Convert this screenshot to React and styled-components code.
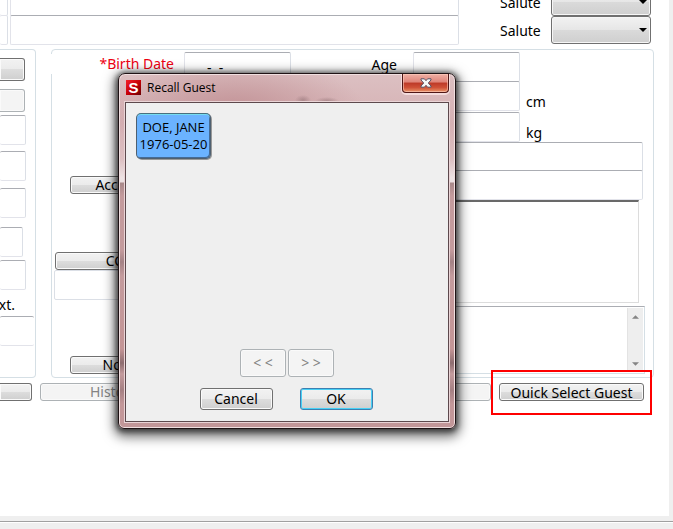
import React from 'react';
import styled, { createGlobalStyle } from 'styled-components';

const GlobalStyle = createGlobalStyle`
  *, *::before, *::after { box-sizing: border-box; }
  html, body { margin: 0; padding: 0; }
  body { overflow: hidden; }
  body, button, input, select, textarea {
    font-family: "Noto Sans", "Open Sans", sans-serif;
    font-size: 14px;
    color: #000;
  }
`;

const Screen = styled.div`
  position: relative;
  display: flex;
  flex-direction: column;
  height: 100vh;
  min-height: 480px;
  background: #efefef;
  overflow: hidden;
`;

const Sheet = styled.main`
  flex: 1;
  min-height: 0;
  margin-right: 4px;
  background: #fff;
  overflow: hidden;
`;

const StatusBar = styled.footer`
  height: 8px;
  margin-top: 5px;
  border-top: 1px solid #a0a0a0;
  box-shadow: inset 0 1px 0 #fff;
`;

const Field = styled.input`
  display: block;
  flex: ${(p) => (p.$width ? 'none' : '1')};
  width: ${(p) => (p.$width ? `${p.$width}px` : '100%')};
  min-width: 0;
  height: 30px;
  padding: 0 0 0 22px;
  border: 1px solid #e2e3ea;
  border-top-color: #abadb3;
  border-right-color: #dbdfe6;
  border-radius: 2px;
  background: #fff;
  outline: none;
`;

const Label = styled.label`
  line-height: 20px;
  white-space: nowrap;
  color: ${(p) => (p.$required ? '#ed0012' : '#000')};
`;

const Button = styled.button`
  display: flex;
  align-items: center;
  justify-content: center;
  flex: ${(p) => (p.$width ? 'none' : '1')};
  width: ${(p) => (p.$width ? `${p.$width}px` : 'auto')};
  height: ${(p) => p.$height || 18}px;
  padding: 0;
  border: 1px solid #707070;
  border-radius: 3px;
  background: linear-gradient(#f2f2f2, #ebebeb 50%, #dddddd 50%, #cfcfcf);
  box-shadow: inset 0 0 0 1px #fafafa;
  line-height: 18px;
  white-space: nowrap;
  overflow: hidden;

  &:disabled {
    border-color: #adb2b5;
    background: #f4f4f4;
    color: #838383;
  }
`;

const BaselineClip = styled.span`
  align-self: flex-start;
  height: 14px;
  line-height: 18px;
  overflow: hidden;
`;

/* Name strip */

const NameStrip = styled.section`
  display: flex;
  height: 58px;
  margin-top: -13px;
`;

const NameColumn = styled.div`
  flex: ${(p) => (p.$narrow ? 'none' : '1')};
  width: ${(p) => (p.$narrow ? '8px' : 'auto')};
  margin-right: ${(p) => (p.$narrow ? '2px' : '0')};
  margin-top: -1px;
  overflow: hidden;
`;

const NameField = styled(Field)`
  padding: 0;
  border-left-width: ${(p) => (p.$narrow ? '0' : '1px')};
  border-top-color: ${(p) => (p.$narrow ? '#e2e3ea' : '#abadb3')};
  & + & { margin-top: -1px; }
`;

const SaluteColumn = styled.div`
  width: 151px;
  margin: 0 18px 0 41px;
`;

const SaluteRow = styled.div`
  display: flex;
  align-items: center;
  justify-content: space-between;
  height: 28px;
  padding-top: 1px;
`;

const SaluteLabel = styled(Label)`
  padding-top: 2px;
`;

const SelectBox = styled.div`
  position: relative;
  width: 100px;
  height: 28px;

  svg {
    position: absolute;
    right: 4px;
    top: 12px;
    pointer-events: none;
  }
`;

const Select = styled.select`
  width: 100%;
  height: 100%;
  appearance: none;
  border: 1px solid #707070;
  border-radius: 3px;
  background: linear-gradient(#f2f2f2, #e6e6e6 50%, #dadada 50%, #cfcfcf);
  box-shadow: inset 0 0 0 1px #f6f6f6;
  outline: none;
`;

/* Panels */

const Panels = styled.section`
  display: flex;
  gap: 15px;
  height: 329px;
  margin: 4px 15px 0 0;
`;

const ContactPanel = styled.div`
  display: flex;
  flex-direction: column;
  width: 36px;
  padding-top: 8px;
  border: 1px solid #d5dfe5;
  border-left: 0;
  border-radius: 0 4px 4px 0;
`;

const ContactField = styled(Field)`
  flex: none;
  width: ${(p) => p.$w || 26}px;
  margin-top: ${(p) => p.$gap}px;
  padding: 0;
  border-left: 0;
`;

const ExtensionField = styled(ContactField)`
  border-right: 0;
`;

const ContactButton = styled(Button)`
  flex: none;
  width: 25px;
  margin-bottom: 8px;
  border-left: 0;
  border-radius: 0 3px 3px 0;
`;

const CroppedLabel = styled.label`
  display: flex;
  justify-content: flex-end;
  width: 15px;
  margin: 5px 0 1px;
  line-height: 20px;
  overflow: hidden;
`;

const GuestPanel = styled.div`
  flex: 1;
  display: flex;
  gap: 10px;
  padding-top: 2px;
  border: 1px solid #d5dfe5;
  border-radius: 4px;
`;

const CaptionColumn = styled.div`
  display: flex;
  flex-direction: column;
  align-items: flex-end;
  width: 122px;
`;

const BirthCaption = styled.div`
  align-self: stretch;
  height: 20px;
  margin: 2px 0 102px -1px;
  background: #fff;
  text-align: right;
`;

const CaptionButton = styled(Button)`
  flex: none;
  margin-bottom: ${(p) => p.$after || 0}px;
`;

const CaptionField = styled(Field)`
  flex: none;
  margin-bottom: 56px;
  border-color: #dbdfe6;
`;

const FieldColumn = styled.div`
  flex: 1;
  min-width: 0;
`;

const FieldRow = styled.div`
  display: flex;
  align-items: flex-start;
  height: ${(p) => p.$height || 30}px;
  margin-right: 10px;
`;

const AgeLabel = styled(Label)`
  width: 122px;
  padding: 3px 16px 0 0;
  text-align: right;
`;

const UnitSpacer = styled.div`
  width: 122px;
`;

const UnitLabel = styled(Label)`
  padding: 11px 0 0 6px;
`;

const SummaryBox = styled.textarea`
  display: block;
  width: calc(100% - 14px);
  height: 103px;
  border: 1px solid #dcdcdc;
  border-top: 2px solid #696969;
  resize: none;
  outline: none;
`;

const NotesBox = styled.div`
  display: flex;
  height: 68px;
  margin: 3px 8px 0 0;
  border: 1px solid #d5dfe5;
  border-top-color: #abadb3;
`;

const NotesArea = styled.textarea`
  flex: 1;
  min-width: 0;
  border: 0;
  resize: none;
  outline: none;
`;

const ScrollTrack = styled.div`
  display: flex;
  flex-direction: column;
  align-items: center;
  justify-content: space-between;
  width: 16px;
  margin: 1px;
  padding: 7px 0 6px;
  border-left: 1px solid #e3e3e3;
  background: #eeeeee;
`;

const ActionRow = styled.div`
  display: flex;
  gap: 8px;
  margin: 5px 25px 0 0;
`;

const LeadButton = styled(Button)`
  border-left: 0;
  border-radius: 0 3px 3px 0;
`;

const Highlight = styled.div`
  position: absolute;
  right: 21px;
  top: 370px;
  width: 161px;
  height: 45px;
  border: 2px solid #fe0000;
  pointer-events: none;
`;

/* Dialog */

const Dialog = styled.div`
  position: absolute;
  left: 118px;
  top: 73px;
  width: 338px;
  padding: 0 6px 6px;
  border: 1px solid #1f1315;
  border-radius: 7px 7px 6px 6px;
  background:
    radial-gradient(ellipse 8px 5px at 184px 26px, #95747899, transparent),
    radial-gradient(ellipse 12px 4px at 208px 27px, #95747899, transparent),
    radial-gradient(ellipse 130px 50px at 115px 34px, #c39498, transparent),
    linear-gradient(#dcc0c2 0, #d5b0b3 50px, #dcbfc1 85px, #eee3e4 104px, #ece0e1 108px, #a88889 109px, #c49b9d 122px, #c49b9d 176px, #a48285 188px, #c49b9d 202px, #c49596 275px, #8e6d70 289px, #c49b9d 300px, #a58083 316px, #c39799 330px);
  box-shadow:
    inset 0 0 0 1px #f0dfe0,
    0 1px 5px 2px rgba(0, 0, 0, 0.5),
    0 4px 12px 4px rgba(0, 0, 0, 0.55);
`;

const TitleBar = styled.header`
  display: flex;
  align-items: flex-start;
  height: 28px;
`;

const Logo = styled.div`
  display: flex;
  align-items: center;
  justify-content: center;
  width: 15px;
  height: 15px;
  margin: 6px 6px 0 1px;
  background: linear-gradient(135deg, #f5202a, #c80008 50%, #680003);
  color: #fff;
  font: bold 15px/15px "Liberation Sans", sans-serif;
`;

const Title = styled.h1`
  flex: 1;
  margin: 5px 0 0;
  font-family: "Open Sans", "Noto Sans", sans-serif;
  font-size: 12px;
  font-weight: 400;
  line-height: 18px;
`;

const CloseButton = styled.button`
  display: flex;
  align-items: center;
  justify-content: center;
  width: 47px;
  height: 19px;
  padding: 0;
  border: 1px solid #4f1716;
  border-top: 0;
  border-radius: 0 0 4px 4px;
  background: linear-gradient(#efb0a6, #df8478 45%, #bd3927 50%, #cf5137 75%, #e99569);
  box-shadow: inset 0 0 0 1px rgba(255, 205, 190, 0.6), 0 1px 0 1px rgba(255, 235, 235, 0.7);
`;

const Client = styled.div`
  display: flex;
  flex-direction: column;
  height: 320px;
  padding: 10px 10px 11px;
  border: 1px solid #5d494d;
  background: #efefef;
  box-shadow: 0 0 0 1px #ead4d6;
`;

const GuestTile = styled.button`
  width: 75px;
  height: 46px;
  padding: 0;
  border: 1px solid #4f6070;
  border-top-color: #48707f;
  border-radius: 5px;
  background: #6bb3ff;
  box-shadow: inset 0 1px 0 #75dcf0, inset -1px -1px 0 #456b96, 1px 1px 0 #999;
  font-family: "Open Sans", "Noto Sans", sans-serif;
  font-size: 13px;
  line-height: 17px;
  white-space: nowrap;
`;

const Pager = styled.div`
  display: flex;
  justify-content: center;
  gap: 2px;
  margin-top: auto;
`;

const PagerButton = styled(Button)`
  color: #838383;
  font-size: 14px;
  white-space: pre;
`;

const DialogActions = styled.div`
  display: flex;
  justify-content: center;
  gap: 27px;
  margin-top: 11px;
  padding-right: 2px;
`;

const OkButton = styled(Button)`
  border-color: #3c7fb1;
  box-shadow: inset 0 0 0 1px #48d0f5;
`;

const Triangle = ({ up, size = 7, color = '#000' }) => (
  <svg width={size} height="4" viewBox="0 0 8 4" aria-hidden="true">
    <path d={up ? 'M0 4 4 0 8 4Z' : 'M0 0H8L4 4Z'} fill={color} />
  </svg>
);

const Salute = ({ id }) => (
  <SaluteRow>
    <SaluteLabel htmlFor={id}>Salute</SaluteLabel>
    <SelectBox>
      <Select id={id}>
        <option aria-label="None" value="" />
      </Select>
      <Triangle size={8} />
    </SelectBox>
  </SaluteRow>
);

function GuestForm() {
  return (
    <Sheet>
      <NameStrip>
        <NameColumn $narrow>
          <NameField $narrow aria-label="First code" />
          <NameField $narrow aria-label="Second code" />
        </NameColumn>
        <NameColumn>
          <NameField aria-label="First name" />
          <NameField aria-label="Second name" />
        </NameColumn>
        <SaluteColumn>
          <Salute id="salute-1" />
          <Salute id="salute-2" />
        </SaluteColumn>
      </NameStrip>

      <Panels>
        <ContactPanel>
          <ContactButton $height={23} aria-label="Look up" />
          <ContactButton $height={23} disabled aria-label="Clear" />
          <ContactField $gap={-5} aria-label="Address" />
          <ContactField $gap={6} aria-label="City" />
          <ContactField $gap={7} aria-label="State" />
          <ContactField $gap={9} $w={23} aria-label="Postal code" />
          <ContactField $gap={3} aria-label="Phone" />
          <CroppedLabel htmlFor="ext">Ext.</CroppedLabel>
          <ExtensionField id="ext" $gap={0} $w={34} />
        </ContactPanel>

        <GuestPanel>
          <CaptionColumn>
            <BirthCaption>
              <Label $required htmlFor="birth">*Birth Date</Label>
            </BirthCaption>
            <CaptionButton $width={104} $after={58}>Account</CaptionButton>
            <CaptionButton $width={119}>CC</CaptionButton>
            <CaptionField $width={120} aria-label="CC" />
            <CaptionButton $width={104}>Notes</CaptionButton>
          </CaptionColumn>
          <FieldColumn>
            <FieldRow $height={29}>
              <Field id="birth" $width={107} defaultValue="-  -" />
              <AgeLabel htmlFor="age">Age</AgeLabel>
              <Field id="age" $width={107} />
            </FieldRow>
            <FieldRow $height={31}>
              <Field $width={107} aria-label="Height in feet" />
              <UnitSpacer />
              <Field id="height" $width={107} />
              <UnitLabel htmlFor="height">cm</UnitLabel>
            </FieldRow>
            <FieldRow>
              <Field $width={107} aria-label="Weight in pounds" />
              <UnitSpacer />
              <Field id="weight" $width={107} />
              <UnitLabel htmlFor="weight">kg</UnitLabel>
            </FieldRow>
            <FieldRow $height={28}>
              <Field aria-label="Account name" />
            </FieldRow>
            <FieldRow>
              <Field aria-label="Account number" />
            </FieldRow>
            <SummaryBox aria-label="Summary" />
            <NotesBox>
              <NotesArea aria-label="Notes" />
              <ScrollTrack>
                <Triangle up color="#858585" />
                <Triangle color="#858585" />
              </ScrollTrack>
            </NotesBox>
          </FieldColumn>
        </GuestPanel>
      </Panels>

      <ActionRow>
        <LeadButton $width={32} aria-label="Save" />
        <Button $width={147} disabled>History</Button>
        <Button disabled aria-label="Merge" />
        <Button $width={145}>
          <BaselineClip>Quick Select Guest</BaselineClip>
        </Button>
      </ActionRow>
    </Sheet>
  );
}

function RecallDialog() {
  return (
    <Dialog role="dialog" aria-labelledby="recall-title">
      <TitleBar>
        <Logo aria-hidden="true">S</Logo>
        <Title id="recall-title">Recall Guest</Title>
        <CloseButton aria-label="Close">
          <svg width="12" height="10" viewBox="0 0 12 10" aria-hidden="true">
            <path
              d="M1 .8H4.4L6 2.7 7.6.8H11V2L8.3 5 11 8V9.2H7.6L6 7.3 4.4 9.2H1V8L3.7 5 1 2Z"
              fill="#f6f6f6"
              stroke="#5b5163"
            />
          </svg>
        </CloseButton>
      </TitleBar>
      <Client>
        <GuestTile>
          DOE, JANE
          <br />
          1976-05-20
        </GuestTile>
        <Pager>
          <PagerButton $width={46} $height={28} disabled>{'< <'}</PagerButton>
          <PagerButton $width={46} $height={28} disabled>{'> >'}</PagerButton>
        </Pager>
        <DialogActions>
          <Button $width={73} $height={22}>Cancel</Button>
          <OkButton $width={73} $height={22}>OK</OkButton>
        </DialogActions>
      </Client>
    </Dialog>
  );
}

export default function App() {
  return (
    <>
      <GlobalStyle />
      <Screen>
        <GuestForm />
        <StatusBar />
        <Highlight />
        <RecallDialog />
      </Screen>
    </>
  );
}
